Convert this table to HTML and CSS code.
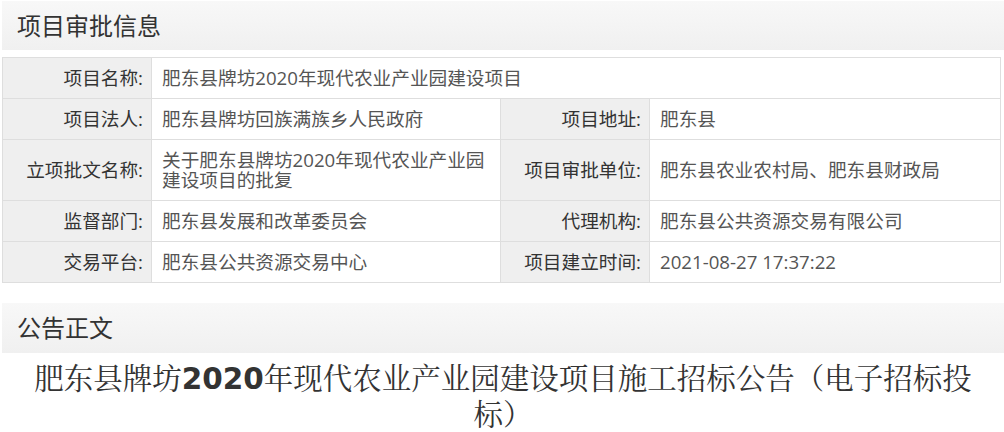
FILE: index.html
```html
<!DOCTYPE html>
<html lang="zh-CN">
<head>
<meta charset="utf-8">
<title>项目审批信息</title>
<link rel="stylesheet" href="styles.css">
</head>
<body>
<div class="page">
  <div class="section-title">项目审批信息</div>
  <table class="info">
    <colgroup>
      <col class="c-label"><col class="c-value"><col class="c-label"><col class="c-value2">
    </colgroup>
    <tr>
      <td class="label">项目名称:</td>
      <td class="value" colspan="3">肥东县牌坊2020年现代农业产业园建设项目</td>
    </tr>
    <tr>
      <td class="label">项目法人:</td>
      <td class="value">肥东县牌坊回族满族乡人民政府</td>
      <td class="label">项目地址:</td>
      <td class="value">肥东县</td>
    </tr>
    <tr>
      <td class="label">立项批文名称:</td>
      <td class="value">关于肥东县牌坊2020年现代农业产业园建设项目的批复</td>
      <td class="label">项目审批单位:</td>
      <td class="value">肥东县农业农村局、肥东县财政局</td>
    </tr>
    <tr>
      <td class="label">监督部门:</td>
      <td class="value">肥东县发展和改革委员会</td>
      <td class="label">代理机构:</td>
      <td class="value">肥东县公共资源交易有限公司</td>
    </tr>
    <tr>
      <td class="label">交易平台:</td>
      <td class="value">肥东县公共资源交易中心</td>
      <td class="label">项目建立时间:</td>
      <td class="value">2021-08-27 17:37:22</td>
    </tr>
  </table>
  <div class="section-title second">公告正文</div>
  <h1 class="notice-title">肥东县牌坊<b>2020</b>年现代农业产业园建设项目施工招标公告（电子招标投标）</h1>
</div>
</body>
</html>
```

FILE: styles.css
```css
html, body {
  margin: 0;
  padding: 0;
  background: #fff;
}
body {
  font-family: "Open Sans", "Noto Sans CJK SC", sans-serif;
  color: #333;
}
.page {
  padding: 1px 0 0 2px;
}
.section-title {
  height: 49px;
  line-height: 49px;
  padding-left: 15px;
  font-size: 24px;
  color: #333;
  background: linear-gradient(#f8f8f8, #f0f0f0);
}
.section-title.second {
  height: 50px;
  line-height: 50px;
  margin-top: 20px;
}
.info {
  margin-top: 7px;
  width: 998px;
  border-collapse: collapse;
  table-layout: fixed;
  font-size: 14pt;
  line-height: 20px;
}
.c-label { width: 149px; }
.c-value { width: 349px; }
.c-value2 { width: 351px; }
.info td {
  border: 1px solid #dedede;
  padding: 10px 10px 10px 10px;
  vertical-align: middle;
}
.info td.label {
  background: #efefef;
  text-align: right;
  color: #333;
  padding-right: 8px;
}
.info td.value {
  color: #555;
}
.notice-title {
  margin: 8px 0 0 0;
  padding: 0 24px;
  text-align: center;
  font-family: "DejaVu Sans", "Noto Serif CJK SC", "Source Han Serif SC", "AR PL UMing CN", serif;
  font-weight: normal;
  font-size: 29.5px;
  line-height: 36px;
  color: #333;
  word-break: break-all;
}
.notice-title b {
  font-weight: bold;
}
```
